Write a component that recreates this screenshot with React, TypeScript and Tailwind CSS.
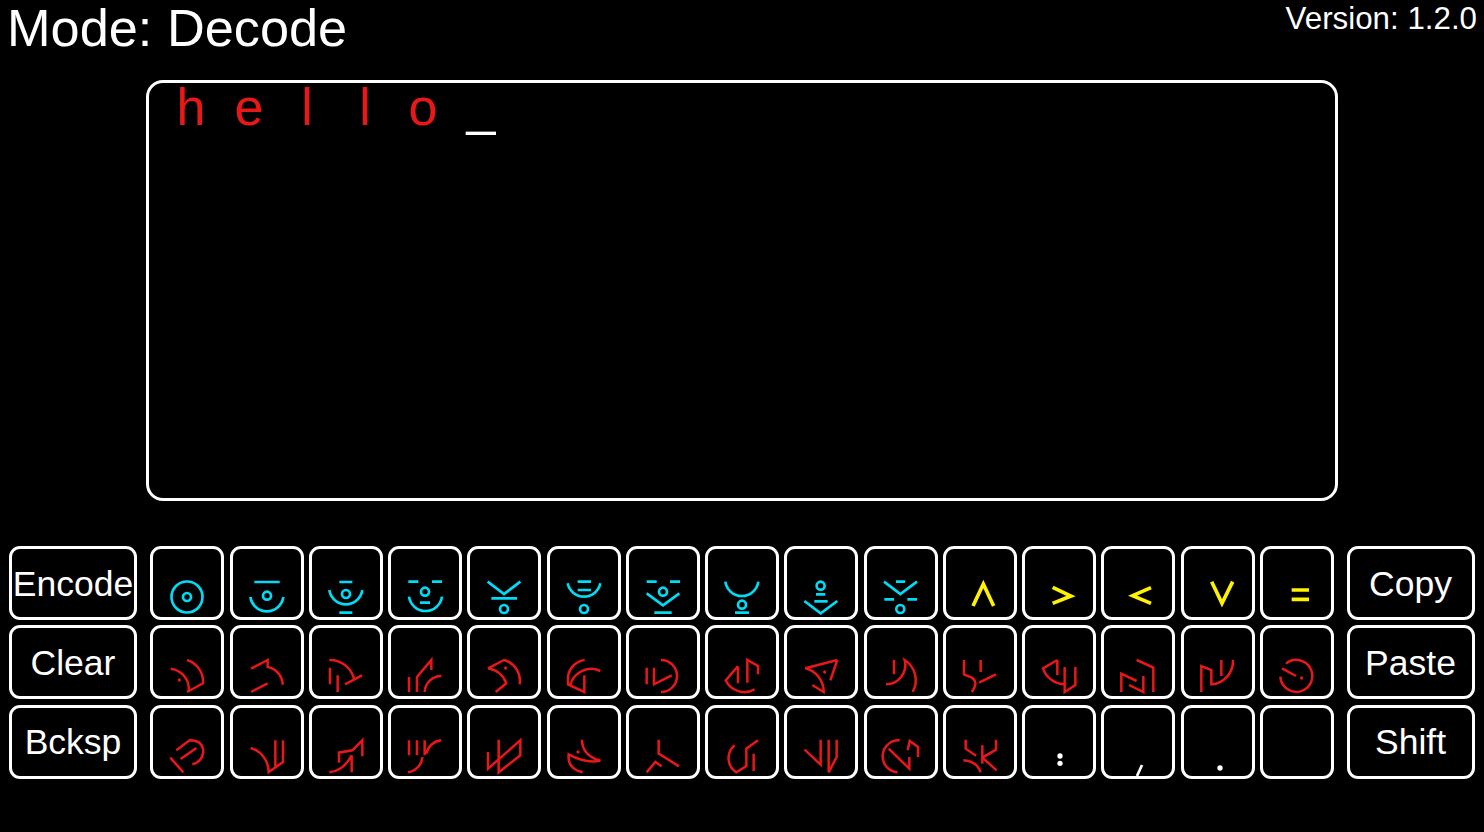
import React from "react";

const CYAN = "#00dcf5";
const YELLOW = "#fff200";
const RED = "#e81818";

type G = { x: number; y: number; d: string; dots?: [number, number][]; rings?: [number, number, number][]; color: string; w: number; dotR?: number };

const B = 3; // border width of a key in px

// Glyphs are written in 3x crop coordinates; x,y is the key's outer corner in that space.
const c = (x: number, y: number, r = 4): [number, number, number] => [x * 3, y * 3, r * 3];
const cyan = (d: string, rings: [number, number, number][]): G => ({ x: 0, y: 0, d, rings, color: CYAN, w: 8 });
const yel = (d: string): G => ({ x: 0, y: 0, d, color: YELLOW, w: 11 });

const row1: G[] = [
  cyan("", [c(37, 51, 15.5), c(37, 51, 4)]),
  cyan("M73 108H149M61 153A50 50 0 0 0 160 153", [c(37, 49.7)]),
  cyan("M91 108H130M61 132A50 50 0 0 0 160 132M91 200H130", [c(37, 48)]),
  cyan("M61 107H91M132 107H162M63 152A50 50 0 0 0 162 152M96 170H126", [c(37, 45.7)]),
  cyan("M62 107L111 144L160 107M73 157H150", [c(37, 63)]),
  cyan("M62 112A50 50 0 0 0 160 112M92 107H132M92 132H132", [c(37, 63)]),
  cyan("M62 107H92M132 107H162M62 142L111 178L160 142M85 200H137", [c(37, 45.7)]),
  cyan("M61 107A50 50 0 0 0 160 107M90 200H132", [c(37, 58.7)]),
  cyan("M96 145H124M91 166H131M61 165L110 202L160 165", [c(36.6, 39.7)]),
  cyan("M60 107L109 144L159 107M96 107H123M61 160H90M130 160H159", [c(36.3, 63)]),
  yel("M90 180L121 114L152 180"),
  yel("M92 124L147 150L92 172"),
  yel("M150 125L95 149L150 172"),
  yel("M92 107L123 172L155 107"),
  yel("M95 132H147M95 160H147"),
];

const red = (x: number, y: number, d: string, dots?: [number, number][]): G => ({ x, y, d, dots, color: RED, w: 7.5, dotR: 5 });
const Y2 = 17;
const Y3 = 14;

const row2: G[] = [
  red(16, Y2, "M127 122A68 68 0 0 1 175 192L127 218M78 148A62 62 0 0 1 132 218", [[104, 182]]),
  red(254, Y2, "M317 148L367 122V143A55 55 0 0 1 412 196M317 218L367 192"),
  red(492, Y2, "M553 122A75 75 0 0 1 627 178M555 145V195M578 168V218M600 195L651 168"),
  red(730, Y2, "M793 173V218M817 218V173L860 122V152M840 218A50 50 0 0 1 890 170"),
  red(22, Y2, "M85 147L133 122A65 65 0 0 1 180 195M85 147A70 70 0 0 1 140 192L108 218", [[138, 146]]),
  red(260, Y2, "M373 122A58 58 0 0 0 323 172V195L372 218V168M420 155A65 65 0 0 0 330 195"),
  red(498, Y2, "M560 145V195M582 145V195L635 168M603 122A48 48 0 0 1 603 218"),
  red(736, Y2, "M835 140L798 183A62 62 0 0 0 885 210M835 142V192M863 190V122L895 140V165"),
  red(28, Y2, "M188 122L92 147A72 72 0 0 1 147 218L113 197M188 122L167 183", [[150, 158]]),
  red(266, Y2, "M356 122V165M332 195A58 58 0 0 0 388 122A72 72 0 0 1 412 218"),
  red(504, Y2, "M567 122V165L590 175Q612 188 590 218M617 122V158M663 165L612 190"),
  red(742, Y2, "M848 122L805 147A70 70 0 0 0 870 195M848 122V167M870 143V218L902 197V143"),
  red(36, Y2, "M143 122L193 145V218M97 218V163L143 185M120 197L163 218V170"),
  red(274, Y2, "M335 218V140L365 152V195A70 70 0 0 0 430 122M395 122V170"),
  red(512, Y2, "M573 172A48 48 0 1 0 590 133M578 147L620 170", [[637, 176]]),
];

const row3: G[] = [
  red(16, Y3, "M77 172L116 216M95 150L135 120Q175 120 176 155Q172 185 143 192M108 176L155 143"),
  red(254, Y3, "M316 143A75 75 0 0 1 370 215L413 185V120M390 120V200"),
  red(492, Y3, "M553 216Q595 212 620 165V216M582 187V157L622 150L652 120V168"),
  red(730, Y3, "M793 120V165M817 120V165M840 120V165M845 160A50 50 0 0 1 890 120M790 216A50 50 0 0 0 833 170"),
  red(22, Y3, "M117 118V216L182 165V120L85 205V155"),
  red(260, Y3, "M365 118Q365 165 420 181Q375 190 325 162Q320 205 367 216", [[353, 155]]),
  red(498, Y3, "M596 118V160L657 198M560 216L586 185L605 198"),
  red(736, Y3, "M825 135A50 50 0 0 0 830 216L860 197V145L895 120M882 160V212"),
  red(28, Y3, "M90 148L138 193V118M162 118V216L186 170V118"),
  red(266, Y3, "M373 120A48 48 0 0 0 367 216M340 145L402 205V170M397 150L403 122L428 140V170"),
  red(504, Y3, "M572 118V145L603 166M663 118V148L622 172M622 135V190M622 172L665 210M565 180Q605 182 617 216"),
  { x: 0, y: 0, d: "", color: "#ffffff", w: 6, dots: [[114, 153], [114, 175]], dotR: 8 },
  { x: 0, y: 0, d: "M123 180L108 213", color: "#ffffff", w: 8 },
  { x: 0, y: 0, d: "", color: "#ffffff", w: 6, dots: [[117, 189]], dotR: 8 },
  { x: 0, y: 0, d: "", color: "#ffffff", w: 6 },
];

function Glyph({ g }: { g: G }) {
  return (
    <svg
      viewBox={`${g.x + B * 3} ${g.y + B * 3} ${222 - B * 6} ${222 - B * 6}`}
      className="block w-full h-full"
      fill="none"
      stroke={g.color}
      strokeWidth={g.w}
    >
      {g.d && <path d={g.d} />}
      {g.rings?.map(([x, y, r], i) => <circle key={i} cx={x} cy={y} r={r} />)}
      {g.dots?.map(([x, y], i) => <circle key={i} cx={x} cy={y} r={g.dotR} fill={g.color} stroke="none" />)}
    </svg>
  );
}

function SideKey({ label }: { label: string }) {
  return (
    <div className="w-[128px] h-[74px] border-[3px] border-white rounded-[11px] flex items-center justify-center pt-[3px] text-[35.5px] leading-none text-white">
      {label}
    </div>
  );
}

const FONT = "font-['Liberation_Sans',Arial,sans-serif]";

export default function App() {
  return (
    <div className={`w-[1484px] h-[832px] bg-black overflow-hidden ${FONT}`}>
      <div className="h-[80px] flex justify-between items-start pl-[7px] pr-[7px]">
        <div className="text-[52.3px] leading-[56px] text-white">Mode: Decode</div>
        <div className="text-[31.3px] leading-[38px] text-white">Version: 1.2.0</div>
      </div>
      <div className="ml-[146px] w-[1192px] h-[421px] border-[3px] border-white rounded-[17px] pl-[13px] flex items-start text-[52px] leading-[48px]">
        {["h", "e", "l", "l", "o"].map((ch, i) => (
          <span key={i} className="w-[58px] text-center text-[#e81818]">{ch}</span>
        ))}
        <span className="w-[58px] text-center text-white">_</span>
      </div>
      <div className="mt-[45px] pl-[9px] flex">
        <div className="flex flex-col gap-[5.25px]">
          <SideKey label="Encode" />
          <SideKey label="Clear" />
          <SideKey label="Bcksp" />
        </div>
        <div className="ml-[13.25px] grid grid-cols-[repeat(15,74px)] auto-rows-[74px] gap-[5.25px]">
          {[...row1, ...row2, ...row3].map((g, i) => (
            <div key={i} className="border-[3px] border-white rounded-[11px]">
              <Glyph g={g} />
            </div>
          ))}
        </div>
        <div className="ml-[12.75px] flex flex-col gap-[5.25px]">
          <SideKey label="Copy" />
          <SideKey label="Paste" />
          <SideKey label="Shift" />
        </div>
      </div>
    </div>
  );
}
